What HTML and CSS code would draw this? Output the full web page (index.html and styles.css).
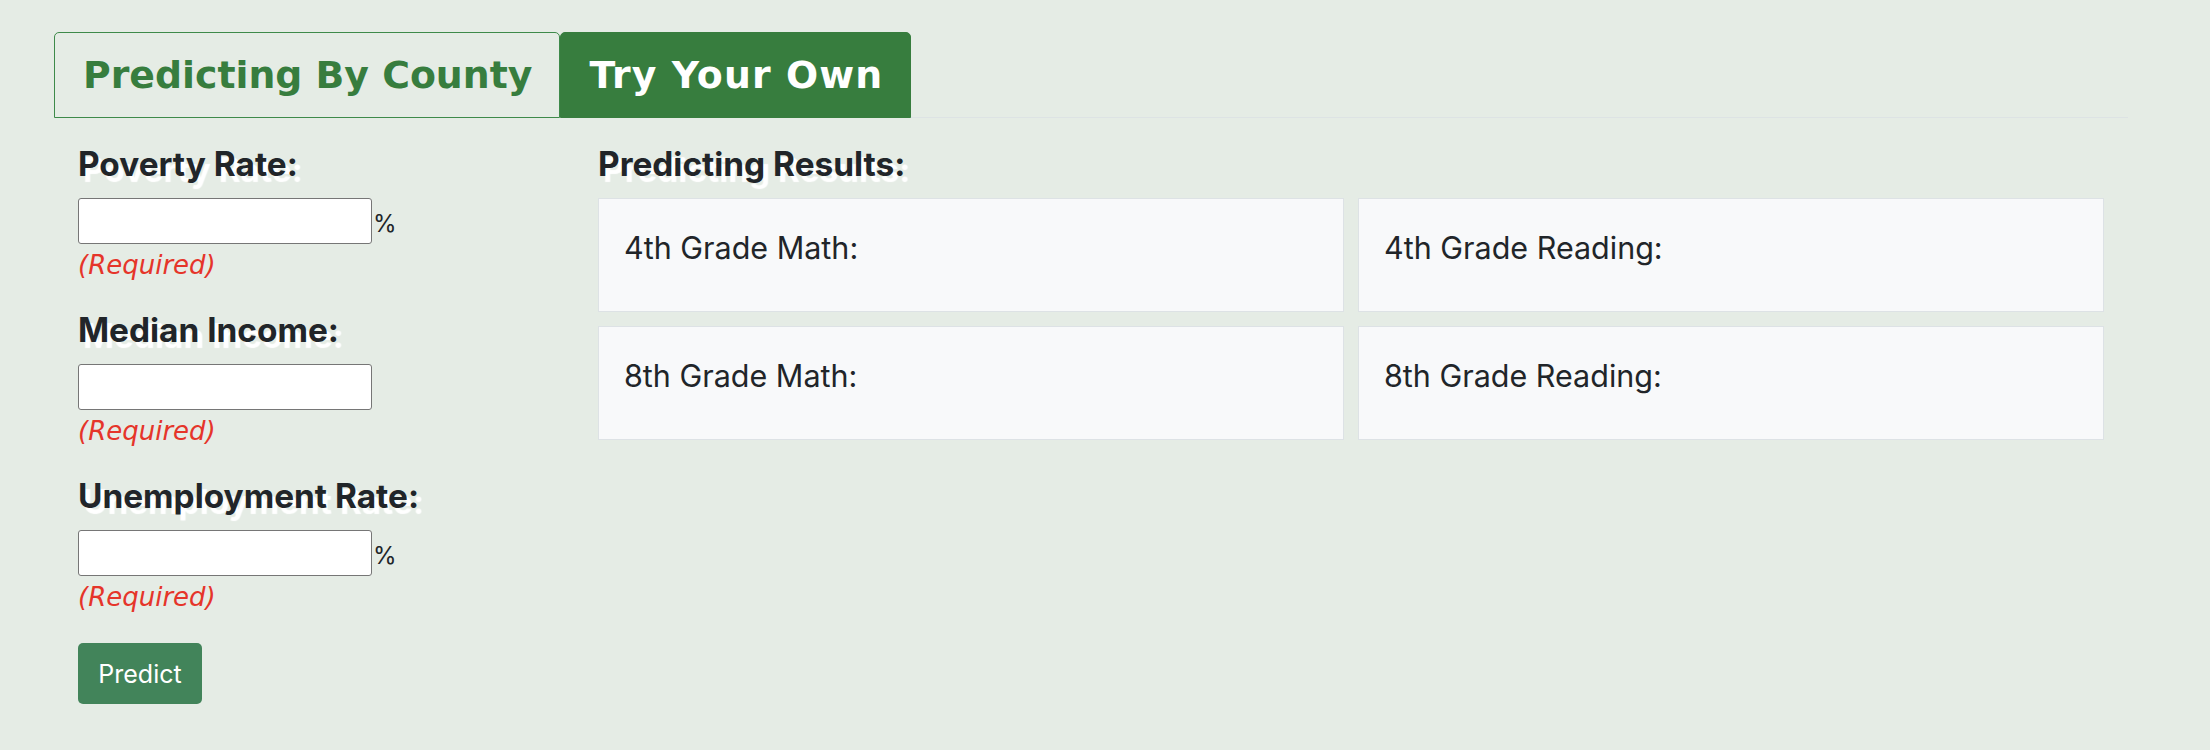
FILE: index.html
```html
<!DOCTYPE html>
<html lang="en">
<head>
<meta charset="utf-8">
<title>Try Your Own</title>
<link rel="stylesheet" href="styles.css">
</head>
<body>
<div class="page">
  <nav class="tabs">
    <a class="tab">Predicting By County</a>
    <a class="tab active">Try Your Own</a>
  </nav>
  <div class="content">
    <form class="inputs">
      <div class="field">
        <h2 class="label">Poverty Rate:</h2>
        <div class="input-row"><input type="text" class="box"><span class="unit">%</span></div>
        <div class="req">(Required)</div>
      </div>
      <div class="field">
        <h2 class="label">Median Income:</h2>
        <div class="input-row"><input type="text" class="box"></div>
        <div class="req">(Required)</div>
      </div>
      <div class="field">
        <h2 class="label">Unemployment Rate:</h2>
        <div class="input-row"><input type="text" class="box"><span class="unit">%</span></div>
        <div class="req">(Required)</div>
      </div>
      <button type="button" class="predict">Predict</button>
    </form>
    <section class="results">
      <h2 class="label">Predicting Results:</h2>
      <div class="cards">
        <div class="card">4th Grade Math:</div>
        <div class="card">4th Grade Reading:</div>
        <div class="card">8th Grade Math:</div>
        <div class="card">8th Grade Reading:</div>
      </div>
    </section>
  </div>
</div>
</body>
</html>
```
FILE: styles.css
```css
html, body {
  margin: 0;
  padding: 0;
  background: #e5ece5;
}
body {
  font-family: Inter, "Noto Sans", sans-serif;
  color: #212529;
}
.page {
  padding: 32px 82px 0 54px;
}
.tabs {
  display: flex;
  border-bottom: 1px solid #dde3e4;
  height: 85px;
  align-items: flex-start;
}
.tab {
  font-family: "DejaVu Sans", Verdana, sans-serif;
  font-weight: bold;
  font-size: 37.8px;
  line-height: 50px;
  padding: 17px 27px 17px 28px;
  border: 1px solid #3e8a4a;
  border-radius: 5px 5px 0 0;
  color: #377d3e;
  background: transparent;
  cursor: pointer;
}
.tab.active {
  background: #377d3e;
  border-color: #377d3e;
  color: #fff;
  letter-spacing: 1.1px;
}
.content {
  display: grid;
  grid-template-columns: 496px 1fr;
  column-gap: 24px;
  padding: 27px 24px 0 24px;
}
.label {
  font-family: Inter, "Noto Sans", sans-serif;
  font-weight: 700;
  font-size: 33.4px;
  line-height: 38.4px;
  margin: 0 0 15px 0;
  color: #212529;
  text-shadow: 5px 6px 1px #fff;
  white-space: nowrap;
}
.field {
  margin-bottom: 30.6px;
}
.input-row {
  display: flex;
  align-items: center;
}
.box {
  width: 294px;
  height: 46px;
  box-sizing: border-box;
  border: 1px solid #767676;
  border-radius: 3px;
  background: #fff;
  margin: 0;
  padding: 0 6px;
  font-size: 20px;
}
.unit {
  font-size: 24px;
  padding-top: 4px;
  margin-left: 1px;
  color: #212529;
}
.req {
  font-family: "DejaVu Sans", Verdana, sans-serif;
  font-style: italic;
  font-size: 26px;
  line-height: 30px;
  color: #e5352a;
  margin-top: 6px;
}
.predict {
  display: block;
  margin-top: 0;
  width: 124px;
  height: 61px;
  border: none;
  border-radius: 5px;
  background: #42845a;
  color: #fff;
  font-family: Inter, "Noto Sans", sans-serif;
  font-size: 25px;
  padding: 0;
}
.cards {
  display: grid;
  grid-template-columns: 1fr 1fr;
  gap: 14px;
}
.card {
  height: 114px;
  box-sizing: border-box;
  background: #f8f9fa;
  border: 1px solid #dde2e5;
  padding: 32px 25px 0 25px;
  font-size: 30.5px;
  line-height: 33.6px;
  color: #212529;
}
```
